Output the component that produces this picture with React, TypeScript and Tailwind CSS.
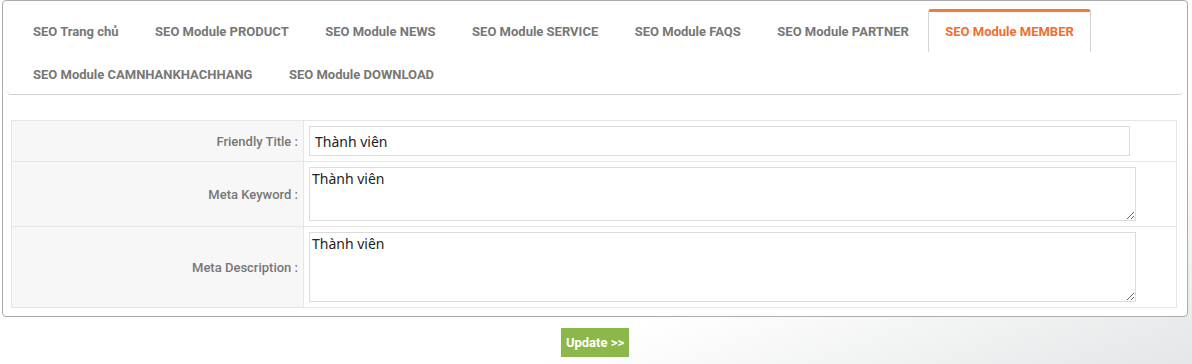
import React from 'react';

const tabsRow1 = [
  'SEO Trang chủ',
  'SEO Module PRODUCT',
  'SEO Module NEWS',
  'SEO Module SERVICE',
  'SEO Module FAQS',
  'SEO Module PARTNER',
  'SEO Module MEMBER',
];
const tabsRow2 = ['SEO Module CAMNHANKHACHHANG', 'SEO Module DOWNLOAD'];

function Tab({ label, active }: { label: string; active?: boolean }) {
  return (
    <div
      className={`h-[43px] px-4 mr-[2.5px] flex items-center text-[13px] font-bold whitespace-nowrap rounded-t-[3px] ${
        active
          ? 'border border-b-0 border-[#d4d4d4] border-t-[3px] border-t-[#f47a3a] text-[#f26e2e] bg-white'
          : 'border border-transparent border-t-[3px] text-[#777777]'
      }`}
    >
      {label}
    </div>
  );
}

export default function App() {
  const active = 'SEO Module MEMBER';
  return (
    <div
      className="w-[1192px] h-[364px] bg-[linear-gradient(160deg,#ffffff_0%,#ffffff_70%,#e4e6e7_100%)] pl-[2px] overflow-hidden"
      style={{ fontFamily: 'Roboto, "Liberation Sans", sans-serif' }}
    >
      <div className="w-[1186px]">
        <div className="border border-[#acacac] rounded-[4px] bg-white pb-[8px]">
          {/* Tabs */}
          <div className="mx-[4px] mt-[8px] border-b border-[#d0d0d0] rounded-b-[4px] pl-[9px]">
            <div className="flex">
              {tabsRow1.map((t) => (
                <Tab key={t} label={t} active={t === active} />
              ))}
            </div>
            <div className="flex -mb-px">
              {tabsRow2.map((t) => (
                <Tab key={t} label={t} active={t === active} />
              ))}
            </div>
          </div>

          {/* Form */}
          <table className="ml-[8px] mt-[25px] w-[1166px] border-collapse border border-[#e6e6e6]">
            <tbody>
              <tr>
                <td className="w-[292px] bg-[#f7f7f7] border border-[#e6e6e6] text-right pr-[5px] pt-[2px] text-[13px] font-medium text-[#777777]">
                  Friendly Title :
                </td>
                <td className="border border-[#e6e6e6] pl-[5px] py-[5px]">
                  <input
                    readOnly
                    value="Thành viên"
                    className="block w-[821px] h-[30px] border border-[#dcdcdc] px-[5px] text-[14px] text-[#222] outline-none"
                    style={{ fontFamily: '"Noto Sans", "DejaVu Sans", sans-serif' }}
                  />
                </td>
              </tr>
              <tr>
                <td className="bg-[#f7f7f7] border border-[#e6e6e6] text-right pr-[5px] pt-[2px] text-[13px] font-medium text-[#777777]">
                  Meta Keyword :
                </td>
                <td className="border border-[#e6e6e6] pl-[5px] py-[5px]">
                  <textarea
                    readOnly
                    value="Thành viên"
                    className="block w-[827px] h-[54px] border border-[#dcdcdc] px-[2px] pt-0 text-[14px] text-[#222] outline-none resize-y"
                    style={{ fontFamily: '"Noto Sans", "DejaVu Sans", sans-serif' }}
                  />
                </td>
              </tr>
              <tr>
                <td className="bg-[#f7f7f7] border border-[#e6e6e6] text-right pr-[5px] pt-[2px] text-[13px] font-medium text-[#777777]">
                  Meta Description :
                </td>
                <td className="border border-[#e6e6e6] pl-[5px] py-[5px]">
                  <textarea
                    readOnly
                    value="Thành viên"
                    className="block w-[827px] h-[70px] border border-[#dcdcdc] px-[2px] pt-0 text-[14px] text-[#222] outline-none resize-y"
                    style={{ fontFamily: '"Noto Sans", "DejaVu Sans", sans-serif' }}
                  />
                </td>
              </tr>
            </tbody>
          </table>
        </div>

        <div className="flex justify-center mt-[11px]">
          <button className="w-[68px] h-[29px] bg-[#8bb848] text-white text-[13px] font-bold">
            Update &gt;&gt;
          </button>
        </div>
      </div>
    </div>
  );
}
